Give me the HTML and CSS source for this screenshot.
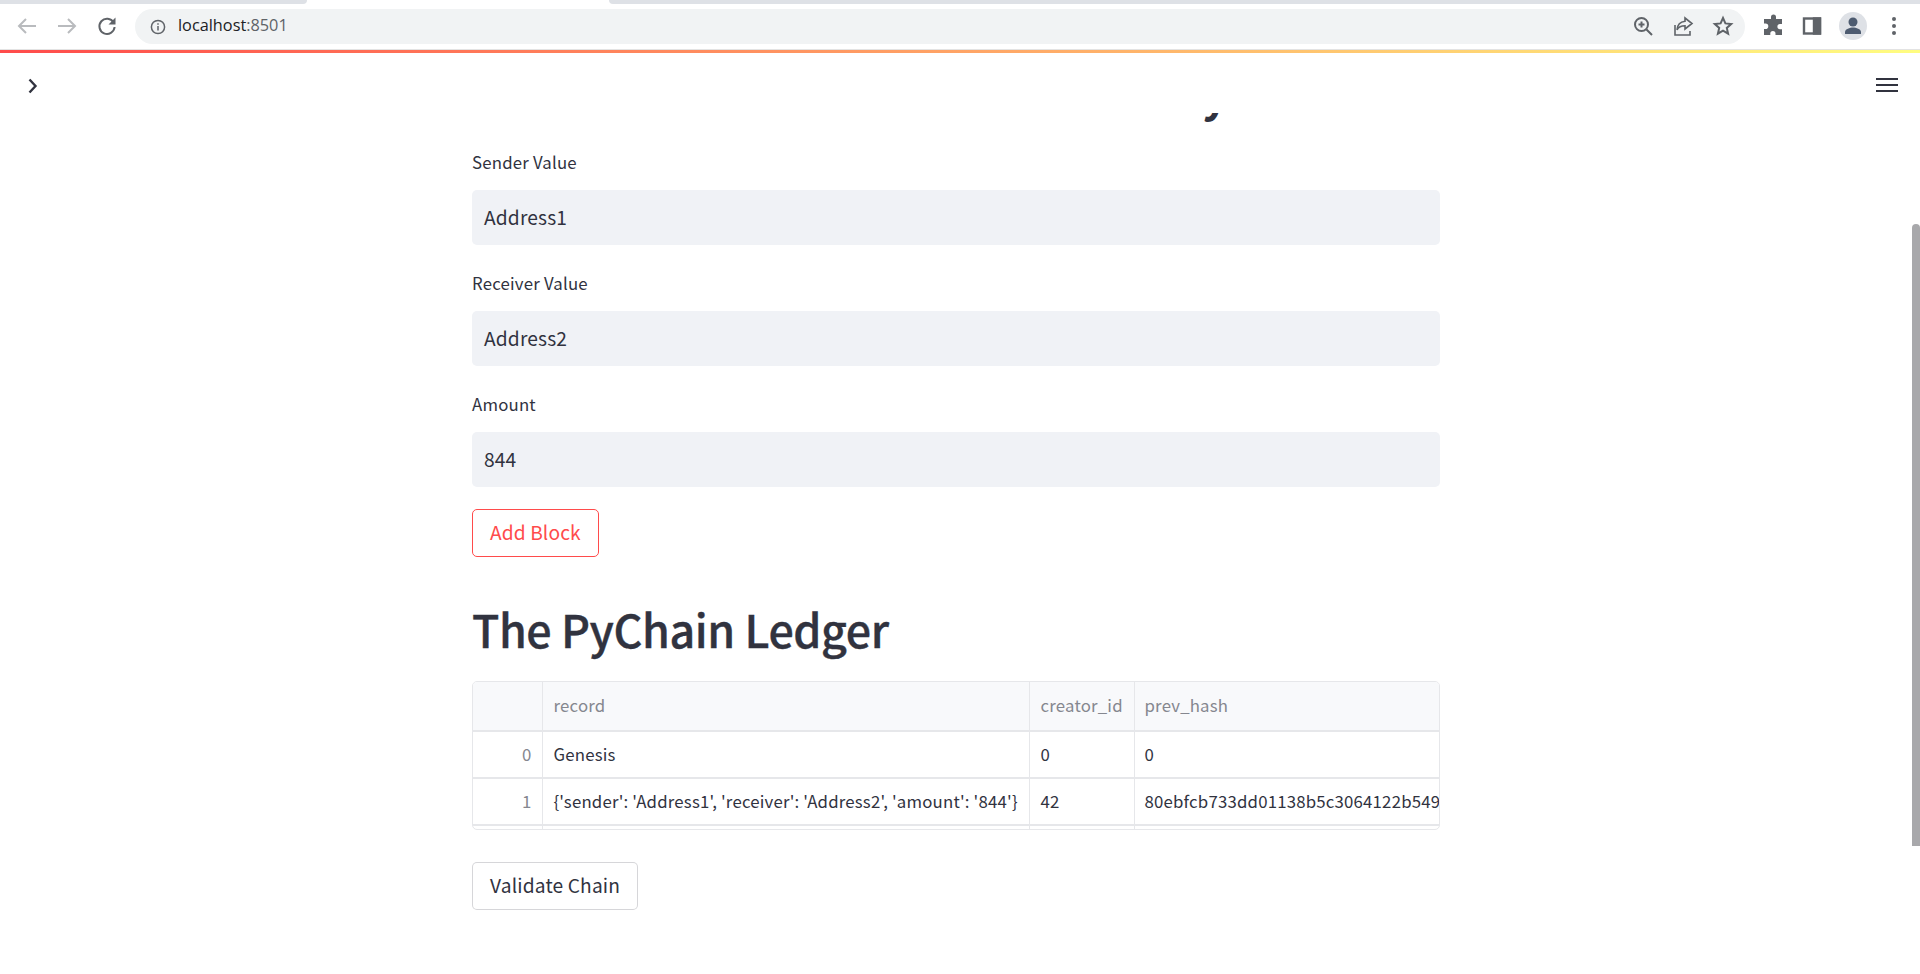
FILE: index.html
```html
<!DOCTYPE html>
<html lang="en">
<head>
    <meta charset="UTF-8">
    <title>PyChain</title>
    <link rel="stylesheet" href="styles.css">
</head>
<body>
    <!-- Browser frame -->
    <div class="tabstrip">
        <div class="tab-gray tab-left"></div>
        <div class="tab-active"></div>
        <div class="tab-gray tab-right"></div>
    </div>
    <div class="toolbar">
        <div class="nav-icons">
            <svg class="icon" viewBox="0 0 24 24" fill="none" stroke="#b9bbbe" stroke-width="2"><path d="M21 12H4M11 5l-7 7 7 7"/></svg>
            <svg class="icon" viewBox="0 0 24 24" fill="none" stroke="#b9bbbe" stroke-width="2"><path d="M3 12h17M13 5l7 7-7 7"/></svg>
            <svg class="icon" viewBox="0 0 24 24" fill="none" stroke="#5f6368" stroke-width="2"><path d="M18.600 8.500A7.600 7.600 0 1 0 19.600 13"/><path d="M20.500 3.500v7h-7" fill="#5f6368" stroke="none"/></svg>
        </div>
        <div class="urlbar">
            <svg class="info-icon" viewBox="0 0 16 16" fill="none" stroke="#5f6368" stroke-width="1.5"><circle cx="8" cy="8" r="6.6"/><path d="M8 7v4.6M8 4.2v1.6"/></svg>
            <span class="url">localhost<span class="url-port">:8501</span></span>
            <div class="url-actions">
                <svg class="icon" viewBox="0 0 24 24" fill="none" stroke="#5f6368" stroke-width="2"><circle cx="10.500" cy="10.500" r="6.500"/><path d="M15.500 15.500l5.500 5.500M10.500 7.500v6M7.500 10.500h6"/></svg>
                <svg class="icon" viewBox="0 0 24 24" fill="none" stroke="#5f6368" stroke-width="1.600"><path d="M4 11v10h15v-4"/><path d="M14 4l7 5.500-7 5.500v-3.200c-4 0-6.400 1.200-8 4 .4-4.600 3-8 8-8.600z"/></svg>
                <svg class="icon" viewBox="0 0 24 24" fill="none" stroke="#5f6368" stroke-width="2"><path d="M12 4l2.400 5.400 5.800.6-4.400 3.900 1.300 5.800-5.100-3-5.100 3 1.300-5.800L3.800 10l5.800-.6z"/></svg>
            </div>
        </div>
        <div class="browser-actions">
            <svg class="icon" viewBox="0 0 24 24" fill="#5f6368"><path d="M10 3a2.500 2.500 0 0 1 5 0v2h6v5h-2a2.600 2.600 0 0 0 0 5.200h2V21h-6.500v-1.500a2.600 2.600 0 0 0-5.200 0V21H3v-6h1.500a2.800 2.800 0 0 0 0-5.600H3V5h7z"/></svg>
            <svg class="icon" viewBox="0 0 24 24" fill="none" stroke="#5f6368" stroke-width="2.400"><rect x="4" y="4.500" width="16" height="15"/><rect x="14" y="4.500" width="6" height="15" fill="#5f6368"/></svg>
            <div class="avatar">
                <svg viewBox="0 0 24 24" fill="#4d5b70" width="24" height="24"><circle cx="12" cy="8" r="4.500"/><path d="M4 20v-2c0-3 5-4.500 8-4.500s8 1.500 8 4.500v2z"/></svg>
            </div>
            <svg class="icon" viewBox="0 0 24 24" fill="#5f6368"><circle cx="12" cy="5" r="2"/><circle cx="12" cy="12" r="2"/><circle cx="12" cy="19" r="2"/></svg>
        </div>
    </div>
    <div class="decoration"></div>

    <!-- App -->
    <div class="app">
        <svg class="sidebar-toggle" viewBox="0 0 12 16" fill="none" stroke="#31333f" stroke-width="2.400"><path d="M2.500 1.500l6 6.500-6 6.500"/></svg>
        <svg class="app-menu" viewBox="0 0 22 14" fill="#31333f"><rect y="0" width="22" height="2"/><rect y="6" width="22" height="2"/><rect y="12" width="22" height="2"/></svg>

        <main class="content">
            <div class="title-clip">
                <h1>Store a Transaction Record in the PyChain</h1>
            </div>

            <div class="field">
                <label>Sender Value</label>
                <div class="text-input">Address1</div>
            </div>
            <div class="field">
                <label>Receiver Value</label>
                <div class="text-input">Address2</div>
            </div>
            <div class="field">
                <label>Amount</label>
                <div class="text-input">844</div>
            </div>

            <button type="button" class="btn btn-active">Add Block</button>

            <h2>The PyChain Ledger</h2>

            <div class="ledger">
                <table>
                    <colgroup>
                        <col class="col-index"><col class="col-record"><col class="col-creator"><col class="col-hash">
                    </colgroup>
                    <thead>
                        <tr><th></th><th>record</th><th>creator_id</th><th>prev_hash</th></tr>
                    </thead>
                    <tbody>
                        <tr><td class="index">0</td><td>Genesis</td><td>0</td><td>0</td></tr>
                        <tr><td class="index">1</td><td>{'sender': 'Address1', 'receiver': 'Address2', 'amount': '844'}</td><td>42</td><td>80ebfcb733dd01138b5c3064122b5495a1c</td></tr>
                        <tr class="cut-row"><td></td><td></td><td></td><td></td></tr>
                    </tbody>
                </table>
            </div>

            <button type="button" class="btn btn-validate">Validate Chain</button>
        </main>

        <div class="scrollbar"><div class="thumb"></div></div>
    </div>
</body>
</html>
```

FILE: styles.css
```css
* { box-sizing: border-box; }

body {
    margin: 0;
    height: 974px;
    overflow: hidden;
    display: flex;
    flex-direction: column;
    background-color: #fff;
    color: #31333f;
    font-family: "Noto Sans CJK SC", "Noto Sans", sans-serif;
}

/* browser frame */
.tabstrip {
    height: 4px;
    display: flex;
    flex: none;
}

.tab-gray {
    background-color: #dee1e6;
}

.tab-left {
    width: 307px;
    border-bottom-right-radius: 8px;
}

.tab-active {
    width: 302px;
}

.tab-right {
    flex: 1;
    border-bottom-left-radius: 8px;
}

.toolbar {
    height: 46px;
    flex: none;
    display: flex;
    align-items: flex-start;
    padding-top: 5px;
    border-bottom: 1px solid #e3e3e3;
}

.icon {
    width: 24px;
    height: 24px;
    flex: none;
}

.nav-icons {
    width: 135px;
    height: 33px;
    flex: none;
    display: flex;
    align-items: center;
    gap: 16px;
    padding-left: 15px;
}

.urlbar {
    width: 1610px;
    height: 35px;
    flex: none;
    display: flex;
    align-items: center;
    padding: 0 10px 0 15px;
    background-color: #f1f3f4;
    border-radius: 18px;
}

.info-icon {
    width: 16px;
    height: 16px;
    flex: none;
}

.url {
    margin-left: 12px;
    font-family: "Open Sans", sans-serif;
    font-size: 16.3px;
    line-height: 33px;
    height: 35px;
    color: #202124;
}

.url-port {
    color: #5f6368;
}

.url-actions {
    margin-left: auto;
    margin-top: -2px;
    display: flex;
    gap: 16px;
}

.browser-actions {
    flex: 1;
    height: 33px;
    display: flex;
    align-items: center;
    gap: 15px;
    padding-left: 16px;
}

.avatar {
    width: 28px;
    height: 28px;
    border-radius: 50%;
    background-color: #dee1e6;
    display: flex;
    align-items: center;
    justify-content: center;
}

.decoration {
    height: 3px;
    flex: none;
    background-image: linear-gradient(90deg, #ff4b4b, #fffd80);
}

/* app */
.app {
    position: relative;
    flex: 1;
    min-height: 0;
    display: flex;
}

.sidebar-toggle {
    position: absolute;
    left: 27px;
    top: 25px;
    width: 12px;
    height: 16px;
}

.app-menu {
    position: absolute;
    left: 1876px;
    top: 25px;
    width: 22px;
    height: 14px;
}

.content {
    flex: 1;
    min-width: 0;
    padding: 0 472px;
}

/* heading is scrolled away, only the tail of its "y" is left under the header */
.title-clip {
    height: 9px;
    margin: 60px 0 28px;
    overflow: hidden;
}

h1 {
    margin: -50px 0 0;
    font-size: 44.8px;
    line-height: 58px;
    font-weight: 700;
    letter-spacing: -1px;
    white-space: nowrap;
}

h2 {
    margin: 41px 0 0;
    font-size: 44.8px;
    line-height: 62px;
    font-weight: 500;
    letter-spacing: -0.42px;
    -webkit-text-stroke: 0.4px #31333f;
}

.field {
    margin-top: 26px;
}

.field label {
    display: block;
    height: 40px;
    font-size: 16.8px;
    line-height: 24px;
    letter-spacing: 0.2px;
}

.text-input {
    height: 55px;
    padding: 0 12px;
    background-color: #f0f2f6;
    border-radius: 5px;
    font-size: 19.200px;
    line-height: 54px;
    letter-spacing: 0.15px;
}

.btn {
    display: block;
    height: 48px;
    margin-top: 22px;
    padding: 0 17px 2px;
    background-color: #fff;
    color: #31333f;
    border: 1px solid rgba(49, 51, 63, 0.2);
    border-radius: 5px;
    font-family: inherit;
    font-size: 19.200px;
    letter-spacing: 0.1px;
}

.btn-active {
    color: #ff4b4b;
    border-color: #ff4b4b;
}

.btn-validate {
    margin-top: 32px;
    letter-spacing: 0.15px;
}

.ledger {
    height: 149px;
    margin-top: 21px;
    border: 1px solid #e6e7ea;
    border-radius: 5px;
    overflow: hidden;
}

table {
    width: 967px;
    table-layout: fixed;
    border-collapse: collapse;
    font-size: 16.8px;
    letter-spacing: 0.2px;
}

.col-index { width: 69px; }
.col-record { width: 487px; }
.col-creator { width: 105px; }

th, td {
    padding: 0 10px 2px 11px;
    border-right: 1px solid #e6e7ea;
    border-bottom: 2px solid #e6e7ea;
    white-space: nowrap;
    overflow: hidden;
    text-align: left;
    font-weight: 400;
}

th:last-child, td:last-child {
    padding-left: 10px;
    border-right: 0;
    text-overflow: clip;
}

th {
    height: 49px;
    background-color: #f8f9fb;
    color: #85878f;
}

td {
    height: 47px;
}

td.index {
    text-align: right;
    color: #85878f;
}

.cut-row td {
    height: 10px;
}

/* page scrollbar */
.scrollbar {
    width: 8px;
    flex: none;
}

.thumb {
    height: 622px;
    margin-top: 171px;
    background-color: #a8a8ab;
    border-radius: 4px 4px 0 0;
}
```
